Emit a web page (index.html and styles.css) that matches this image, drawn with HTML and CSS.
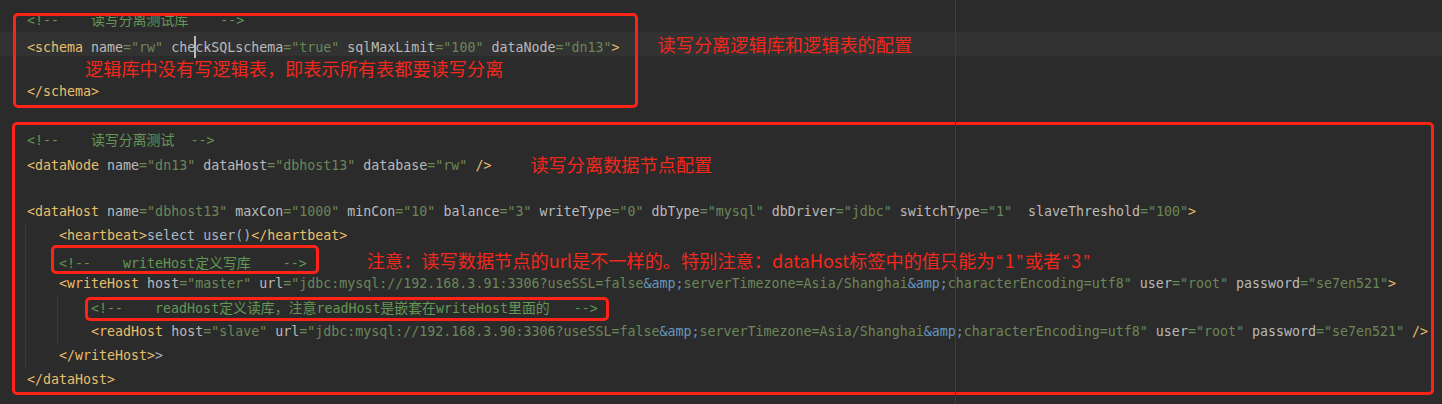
FILE: index.html
```html
<!DOCTYPE html>
<html lang="zh-CN">
<head>
    <meta charset="UTF-8">
    <meta name="viewport" content="width=device-width, initial-scale=1.0">
    <title>schema.xml - 读写分离配置</title>
    <link rel="stylesheet" href="styles.css">
</head>
<body>
    <div class="editor">
        <div class="line"><span class="cm">&lt;!--    <span class="zh">读写分离测试库</span>    --&gt;</span></div>
        <div class="line current"><span class="tg">&lt;schema</span> <span class="at">name</span><span class="va">="rw"</span> <span class="at">che<span class="caret"></span>ckSQLschema</span><span class="va">="true"</span> <span class="at">sqlMaxLimit</span><span class="va">="100"</span> <span class="at">dataNode</span><span class="va">="dn13"</span><span class="tg">&gt;</span><span class="note note-schema">读写分离逻辑库和逻辑表的配置</span></div>
        <div class="line"><span class="note note-table">逻辑库中没有写逻辑表，即表示所有表都要读写分离</span></div>
        <div class="line"><span class="tg">&lt;/schema&gt;</span></div>
        <div class="line"></div>
        <div class="line"><span class="cm">&lt;!--    <span class="zh">读写分离测试</span>  --&gt;</span></div>
        <div class="line"><span class="tg">&lt;dataNode</span> <span class="at">name</span><span class="va">="dn13"</span> <span class="at">dataHost</span><span class="va">="dbhost13"</span> <span class="at">database</span><span class="va">="rw"</span> <span class="tg">/&gt;</span><span class="note note-node">读写分离数据节点配置</span></div>
        <div class="line"></div>
        <div class="line"><span class="tg">&lt;dataHost</span> <span class="at">name</span><span class="va">="dbhost13"</span> <span class="at">maxCon</span><span class="va">="1000"</span> <span class="at">minCon</span><span class="va">="10"</span> <span class="at">balance</span><span class="va">="3"</span> <span class="at">writeType</span><span class="va">="0"</span> <span class="at">dbType</span><span class="va">="mysql"</span> <span class="at">dbDriver</span><span class="va">="jdbc"</span> <span class="at">switchType</span><span class="va">="1"</span>  <span class="at">slaveThreshold</span><span class="va">="100"</span><span class="tg">&gt;</span></div>
        <div class="guide">
            <div class="line">    <span class="tg">&lt;heartbeat&gt;</span>select user()<span class="tg">&lt;/heartbeat&gt;</span></div>
            <div class="line">    <span class="cm">&lt;!--    writeHost<span class="zh">定义写库</span>    --&gt;</span><span class="note note-host">注意：读写数据节点的url是不一样的。特别注意：dataHost标签中的值只能为<span class="q">“</span>1<span class="q">”</span>或者<span class="q">“</span>3<span class="q">”</span></span></div>
            <div class="line">    <span class="tg">&lt;writeHost</span> <span class="at">host</span><span class="va">="master"</span> <span class="at">url</span><span class="va">="jdbc:mysql://192.168.3.91:3306?useSSL=false<span class="en">&amp;amp;</span>serverTimezone=Asia/Shanghai<span class="en">&amp;amp;</span>characterEncoding=utf8"</span> <span class="at">user</span><span class="va">="root"</span> <span class="at">password</span><span class="va">="se7en521"</span><span class="tg">&gt;</span></div>
            <div class="guide guide-inner">
                <div class="line">        <span class="cm">&lt;!--    readHost<span class="zh">定义读库，注意</span>readHost<span class="zh">是嵌套在</span>writeHost<span class="zh">里面的</span>   --&gt;</span></div>
                <div class="line">        <span class="tg">&lt;readHost</span> <span class="at">host</span><span class="va">="slave"</span> <span class="at">url</span><span class="va">="jdbc:mysql://192.168.3.90:3306?useSSL=false<span class="en">&amp;amp;</span>serverTimezone=Asia/Shanghai<span class="en">&amp;amp;</span>characterEncoding=utf8"</span> <span class="at">user</span><span class="va">="root"</span> <span class="at">password</span><span class="va">="se7en521"</span> <span class="tg">/&gt;</span></div>
            </div>
            <div class="line">    <span class="tg">&lt;/writeHost&gt;</span>&gt;</div>
        </div>
        <div class="line"><span class="tg">&lt;/dataHost&gt;</span></div>

        <!-- red marks drawn over the code -->
        <div class="mark mark-schema"></div>
        <div class="mark mark-datahost"></div>
        <div class="mark mark-write"></div>
        <div class="mark mark-read"></div>
    </div>
</body>
</html>
```

FILE: styles.css
```css
* {
    margin: 0;
    padding: 0;
    box-sizing: border-box;
}

html, body {
    height: 100%;
}

body {
    background: #2b2b2b;
    overflow: hidden;
}

.editor {
    position: relative;
    height: 100%;
    padding-top: 8px;
    font-family: 'DejaVu Sans Mono', 'Noto Sans CJK SC', monospace;
    font-size: 13.3px;
    color: #a9b7c6;
}

/* right margin guide */
.editor::after {
    content: "";
    position: absolute;
    left: 955px;
    top: 0;
    bottom: 0;
    width: 1px;
    background: #3d3d3d;
}

.line {
    height: 24px;
    line-height: 24px;
    padding-left: 27px;
    white-space: pre;
}

.line.current {
    background: #323232;
}

.guide {
    background: linear-gradient(#393939, #393939) no-repeat 25px 0 / 1px 100%;
}

.guide-inner {
    background-position: 57px 0;
}

.tg {
    color: #e8bf6a;
}

.at {
    color: #bababa;
}

.va {
    color: #6a8759;
}

.en {
    color: #6897bb;
}

.cm {
    color: #629755;
}

.zh {
    font-size: 13.9px;
}

.caret {
    display: inline-block;
    width: 0;
    height: 20px;
    vertical-align: -5px;
    box-shadow: 0 0 0 1px #bbbbbb;
}

.note {
    font-family: 'Noto Sans CJK SC', sans-serif;
    font-size: 18.2px;
    color: #f3281d;
}

.note .q {
    font-family: 'Liberation Sans', sans-serif;
    margin: 0 2px;
}

.note-schema {
    margin-left: 38px;
}

.note-table {
    margin-left: 58px;
    vertical-align: 3px;
}

.note-node {
    margin-left: 39px;
    vertical-align: -2px;
}

.note-host {
    margin-left: 60px;
}

.mark {
    position: absolute;
    border: 3px solid #ff2217;
    border-radius: 5px;
}

.mark-schema {
    left: 13px;
    top: 13px;
    width: 625px;
    height: 95px;
}

.mark-datahost {
    left: 12px;
    top: 122px;
    width: 1422px;
    height: 273px;
}

.mark-write {
    left: 51px;
    top: 245px;
    width: 268px;
    height: 29px;
}

.mark-read {
    left: 85px;
    top: 297px;
    width: 524px;
    height: 24px;
}
```
